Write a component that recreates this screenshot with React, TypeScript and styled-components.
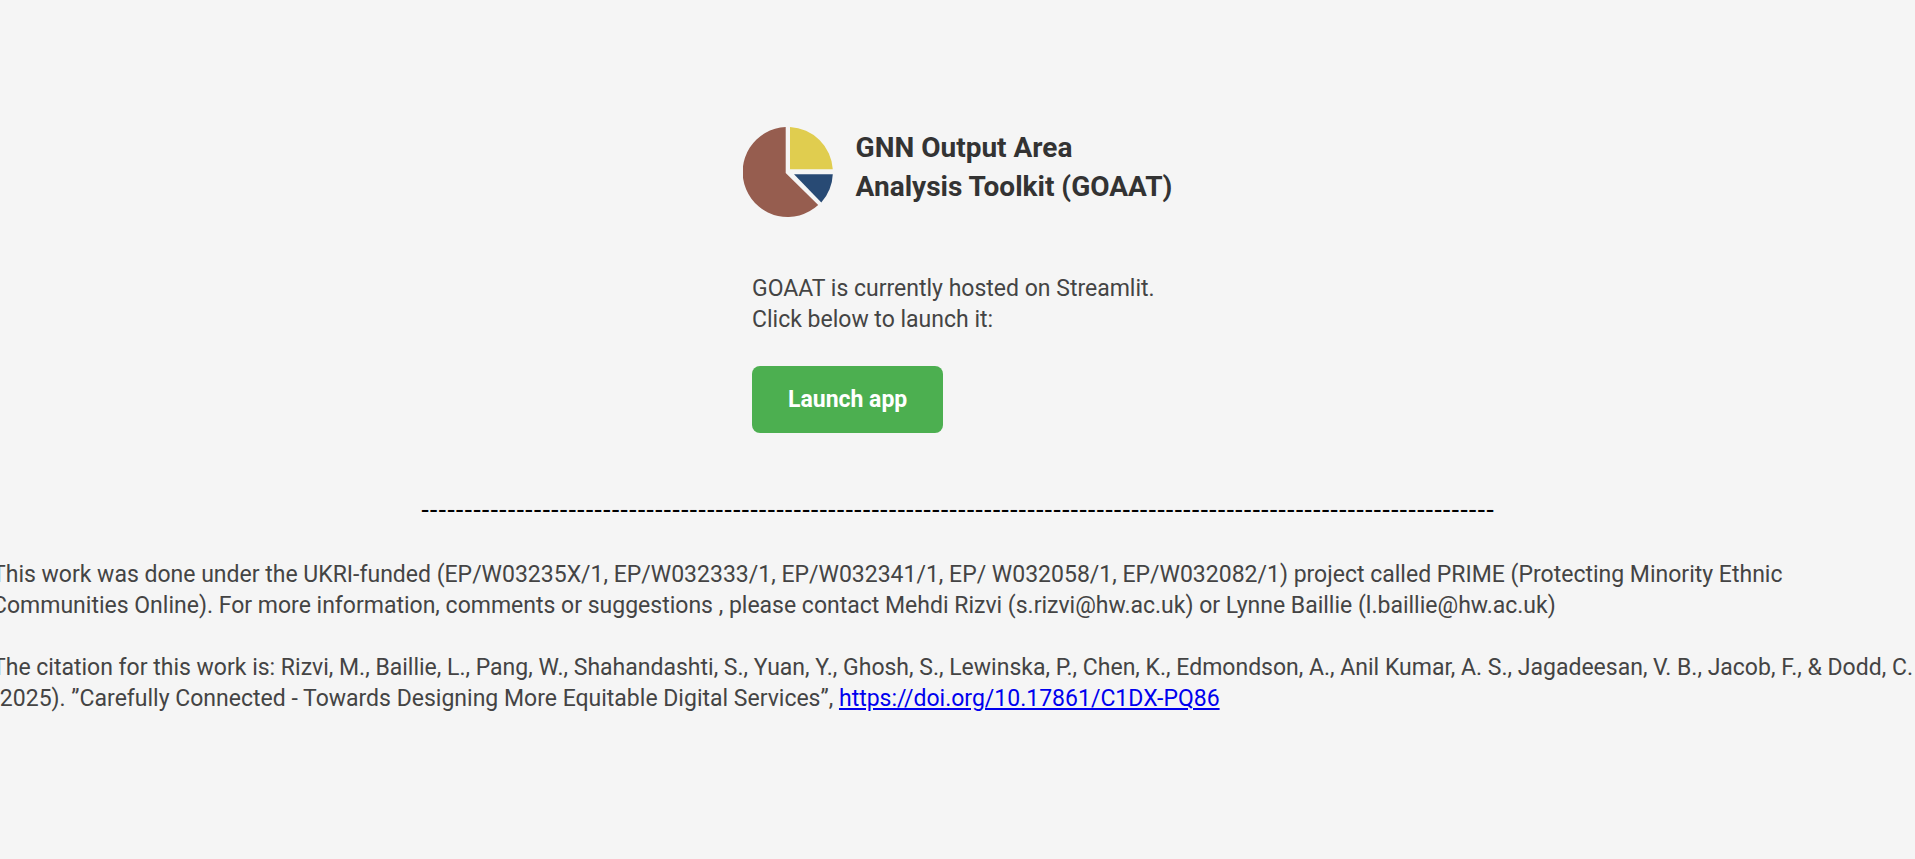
import React from 'react';
import styled, { createGlobalStyle } from 'styled-components';

const GlobalStyle = createGlobalStyle`
  body {
    margin: 0;
    background: #f5f5f5;
    font-family: Roboto, "Liberation Sans", sans-serif;
    font-size: 23px;
    line-height: 31px;
    overflow-x: hidden;
  }
`;

const Page = styled.main`
  display: flex;
  flex-direction: column;
  align-items: center;
  padding: 127px 0 80px;
`;

const Header = styled.header`
  display: flex;
  align-items: flex-start;
  gap: 23px;
  margin-bottom: 56px;
`;

const Logo = styled.svg`
  width: 90px;
  height: 90px;
  flex: none;
`;

const Title = styled.h1`
  margin: 0;
  padding-top: 1px;
  color: #333;
  font-size: 28px;
  font-weight: 700;
  line-height: 39px;
`;

const Intro = styled.section`
  display: flex;
  flex-direction: column;
  align-items: flex-start;
  gap: 31px;
  width: 411px;
  max-width: 100%;
`;

const Text = styled.p`
  margin: 0;
  color: #444;
`;

const LaunchButton = styled.button`
  padding: 18px 36px;
  border: 0;
  border-radius: 8px;
  background: #4caf50;
  color: #fff;
  font: inherit;
  font-weight: 700;
  cursor: pointer;
`;

const Divider = styled.div`
  margin: 61px 0 34px;
  color: #000;
  font-family: "Liberation Sans", Arial, sans-serif;
  font-size: 26px;
  white-space: nowrap;
`;

const Credits = styled.footer`
  display: flex;
  flex-direction: column;
  align-self: stretch;
  gap: 31px;
  margin: 0 -8px;
  white-space: nowrap;
`;

const CitationLink = styled.a`
  color: #0000ee;
  text-decoration: underline;
`;

export default function App() {
  return (
    <>
      <GlobalStyle />
      <Page>
        <Header>
          <Logo viewBox="0 0 90 90" role="img" aria-label="GOAAT logo">
            <path fill="#965d4f" d="M42.7 0V46L75.2 78A45 45 0 1 1 42.7 0Z" />
            <path fill="#e0cd4f" d="M47 0A45 45 0 0 1 89.8 42.3H47Z" />
            <path fill="#284a74" d="M51 47.3H89.8A45 45 0 0 1 78.3 75.4Z" />
          </Logo>
          <Title>
            GNN Output Area
            <br />
            Analysis Toolkit (GOAAT)
          </Title>
        </Header>

        <Intro>
          <Text>
            GOAAT is currently hosted on Streamlit.
            <br />
            Click below to launch it:
          </Text>
          <LaunchButton type="button">Launch app</LaunchButton>
        </Intro>

        <Divider>{'-'.repeat(124)}</Divider>

        <Credits>
          <Text>
            This work was done under the UKRI-funded (EP/W03235X/1, EP/W032333/1, EP/W032341/1, EP/ W032058/1,
            EP/W032082/1) project called PRIME (Protecting Minority Ethnic
            <br />
            Communities Online). For more information, comments or suggestions , please contact Mehdi Rizvi
            (s.rizvi@hw.ac.uk) or Lynne Baillie (l.baillie@hw.ac.uk)
          </Text>
          <Text>
            The citation for this work is: Rizvi, M., Baillie, L., Pang, W., Shahandashti, S., Yuan, Y., Ghosh, S.,
            Lewinska, P., Chen, K., Edmondson, A., Anil Kumar, A. S., Jagadeesan, V. B., Jacob, F., &amp; Dodd, C.
            <br />
            (2025). ”Carefully Connected - Towards Designing More Equitable Digital Services”,{' '}
            <CitationLink href="https://doi.org/10.17861/C1DX-PQ86">https://doi.org/10.17861/C1DX-PQ86</CitationLink>
          </Text>
        </Credits>
      </Page>
    </>
  );
}
